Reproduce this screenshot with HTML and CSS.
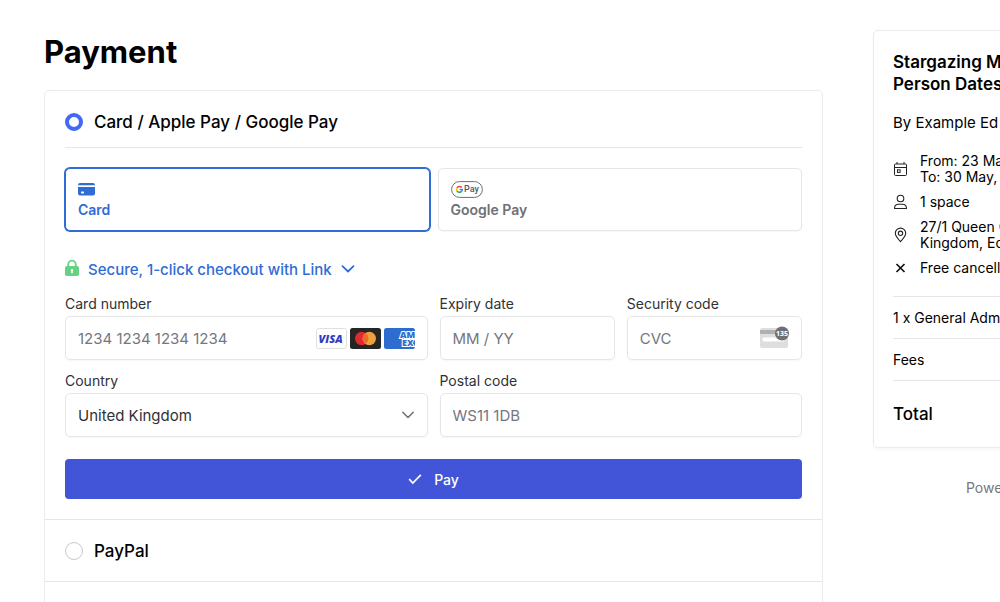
FILE: index.html
```html
<!DOCTYPE html>
<html lang="en">
<head>
  <meta charset="UTF-8" />
  <title>Payment</title>
  <meta name="viewport" content="width=device-width, initial-scale=1.0" />
  <link rel="stylesheet" href="styles.css">
</head>
<body>
  <div class="page">
    <main class="payment">
      <h1>Payment</h1>

      <form class="methods">
        <!-- card -->
        <section class="method">
          <label class="method-title with-line">
            <input type="radio" name="method" class="radio" checked />
            Card / Apple Pay / Google Pay
          </label>

          <div class="tabs">
            <button type="button" class="tab selected">
              <svg class="tab-icon" width="18" height="17" viewBox="0 0 18 17">
                <path d="M2 2h13a2 2 0 0 1 2 2v.3H0V4a2 2 0 0 1 2-2z" fill="#2f6cd6" />
                <path d="M0 6h17v6.500a2 2 0 0 1-2 2H2a2 2 0 0 1-2-2z" fill="#2f6cd6" />
                <rect x="3" y="10.500" width="3" height="2" rx=".8" fill="#fff" />
              </svg>
              <span>Card</span>
            </button>
            <button type="button" class="tab">
              <svg class="tab-icon" width="32" height="17" viewBox="0 0 32 17">
                <rect x=".6" y=".6" width="30.800" height="15.800" rx="7.900" fill="#fff" stroke="#6b6e72" />
                <g fill="none" stroke-width="1.500">
                  <path d="M10.700 6.500A2.900 2.900 0 0 0 6 7" stroke="#ea4335" />
                  <path d="M6 7a2.900 2.900 0 0 0 0 3" stroke="#fbbc04" />
                  <path d="M6 10a2.900 2.900 0 0 0 4.300.7" stroke="#34a853" />
                  <path d="M10.300 10.700a2.900 2.900 0 0 0 1-2.200H8.600" stroke="#4285f4" />
                </g>
                <text x="13" y="11.300" class="gpay-text">Pay</text>
              </svg>
              <span>Google Pay</span>
            </button>
          </div>

          <button type="button" class="link-checkout">
            <svg width="14" height="18" viewBox="0 0 14 18">
              <path d="M3.200 7V4.500a3.800 3.800 0 0 1 7.600 0V7" fill="none" stroke="#65d283" stroke-width="1.800" />
              <rect x="0" y="6" width="14" height="10" rx="1.800" fill="#65d283" />
              <path d="M6.200 11.200a1.200 1.200 0 1 1 1.600 0v1.600a.8.8 0 0 1-1.600 0z" fill="#fff" />
            </svg>
            <span>Secure, 1-click checkout with Link</span>
            <svg width="14" height="8" viewBox="0 0 14 8">
              <path d="M1.500 1.200 7 6.500l5.500-5.300" fill="none" stroke="#2f6cd6" stroke-width="1.800" stroke-linecap="round" stroke-linejoin="round" />
            </svg>
          </button>

          <div class="fields">
            <div class="field wide">
              <label for="number">Card number</label>
              <div class="control">
                <input type="text" id="number" placeholder="1234 1234 1234 1234" />
                <div class="brands">
                  <svg width="31" height="21" viewBox="0 0 31 21">
                    <rect x=".5" y=".5" width="30" height="20" rx="2" fill="#fff" stroke="#dedfe3" />
                    <text x="2.500" y="14.500" class="visa-text">VISA</text>
                  </svg>
                  <svg width="31" height="21" viewBox="0 0 31 21">
                    <rect width="31" height="21" rx="2.500" fill="#252525" />
                    <circle cx="11.700" cy="10.500" r="6.700" fill="#df2b2f" />
                    <circle cx="19.300" cy="10.500" r="6.700" fill="#eea03d" />
                    <path d="M15.500 5a6.700 6.700 0 0 1 0 11 6.700 6.700 0 0 1 0-11z" fill="#ee6b2d" />
                  </svg>
                  <svg width="31" height="21" viewBox="0 0 31 21">
                    <rect width="31" height="21" rx="2.500" fill="#2e6dcd" />
                    <text x="16" y="10" class="amex-text">AM</text>
                    <text x="18" y="17.500" class="amex-text">EX</text>
                  </svg>
                </div>
              </div>
            </div>

            <div class="field">
              <label for="expiry">Expiry date</label>
              <div class="control">
                <input type="text" id="expiry" placeholder="MM / YY" />
              </div>
            </div>

            <div class="field">
              <label for="cvc">Security code</label>
              <div class="control">
                <input type="text" id="cvc" placeholder="CVC" />
                <div class="brands">
                  <svg width="30" height="24" viewBox="0 0 30 24">
                    <rect x="1" y="2" width="28" height="20" rx="2.500" fill="#dedede" />
                    <rect x="1" y="4" width="28" height="4" fill="#b0b0b0" />
                    <rect x="3.500" y="11.500" width="22" height="4" rx="1.500" fill="#fff" />
                    <circle cx="23" cy="7.500" r="7" fill="#6f7073" />
                    <text x="23" y="10" class="cvc-text">135</text>
                  </svg>
                </div>
              </div>
            </div>

            <div class="field wide">
              <label for="country">Country</label>
              <div class="control">
                <select id="country">
                  <option>United Kingdom</option>
                </select>
                <svg class="chevron" width="14" height="8" viewBox="0 0 14 8">
                  <path d="M1.800 1.300 7 6.500l5.200-5.200" fill="none" stroke="#6d6e78" stroke-width="1.500" stroke-linecap="round" stroke-linejoin="round" />
                </svg>
              </div>
            </div>

            <div class="field wide">
              <label for="postal">Postal code</label>
              <div class="control">
                <input type="text" id="postal" placeholder="WS11 1DB" />
              </div>
            </div>
          </div>

          <button type="submit" class="pay">
            <svg width="14" height="12" viewBox="0 0 14 12">
              <path d="M1.200 6.200 4.800 10 12.800 1.800" fill="none" stroke="#fff" stroke-width="1.700" />
            </svg>
            <span>Pay</span>
          </button>
        </section>

        <!-- paypal -->
        <section class="method">
          <label class="method-title">
            <input type="radio" name="method" class="radio" />
            PayPal
          </label>
        </section>

        <section class="method next"></section>
      </form>
    </main>

    <aside class="side">
      <div class="summary">
        <h2>Stargazing M<br />Person Dates</h2>
        <p class="host">By Example Ed</p>

        <ul class="details">
          <li>
            <svg width="15" height="16" viewBox="0 0 15 16">
              <g fill="none" stroke="#222">
                <rect x="1.500" y="3" width="12" height="11.500" rx="1" />
                <path d="M1.500 6.500h12M4 1v2M11 1v2" />
                <rect x="4.500" y="8.800" width="2.600" height="2.600" />
              </g>
            </svg>
            <span>From: 23 Ma<br />To: 30 May, 1</span>
          </li>
          <li>
            <svg width="15" height="16" viewBox="0 0 15 16">
              <g fill="none" stroke="#222" stroke-width="1.100">
                <circle cx="7.500" cy="4.500" r="3.300" />
                <path d="M1.500 14.500c0-3 2-4.300 4-4.300h4c2 0 4 1.300 4 4.300z" stroke-linejoin="round" />
              </g>
            </svg>
            <span>1 space</span>
          </li>
          <li>
            <svg width="15" height="16" viewBox="0 0 15 16">
              <g fill="none" stroke="#222" stroke-width="1.100">
                <path d="M7.500 14.700C5 12 2.300 9 2.300 6.300a5.200 5.200 0 0 1 10.400 0C12.700 9 10 12 7.500 14.700z" />
                <circle cx="7.500" cy="6.300" r="2.200" />
              </g>
            </svg>
            <span>27/1 Queen C<br />Kingdom, Ed</span>
          </li>
          <li>
            <svg width="15" height="16" viewBox="0 0 15 16">
              <path d="m3.500 4 8 8M11.500 4l-8 8" stroke="#111" stroke-width="1.700" />
            </svg>
            <span>Free cancella</span>
          </li>
        </ul>

        <div class="line">1 x General Admi</div>
        <div class="line">Fees</div>
        <div class="line total">Total</div>
      </div>
      <p class="powered">Powe</p>
    </aside>
  </div>
</body>
</html>
```
FILE: styles.css
```css
* {
  box-sizing: border-box;
}
html, body {
  margin: 0;
  padding: 0;
  overflow: hidden;
}
body {
  background: #fff;
  color: #000;
  font-family: Inter, "Liberation Sans", sans-serif;
  font-size: 14px;
}
button, input, select {
  font: inherit;
  margin: 0;
}
svg {
  display: block;
  flex: none;
}
.page {
  display: flex;
  align-items: flex-start;
  gap: 50px;
  min-width: 1263px;
  padding: 30px 44px 0;
}
.payment {
  flex: 1;
}
h1 {
  margin: 0;
  padding: 2px 0 18px;
  font-size: 31px;
  line-height: 40px;
  font-weight: 700;
}

/* payment methods */
.methods {
  border: 1px solid #ebebef;
  border-radius: 5px;
}
.method {
  padding: 0 20px;
}
.method + .method {
  border-top: 1px solid #e6e6ea;
}
.method-title {
  display: flex;
  align-items: center;
  gap: 11px;
  height: 61px;
  font-size: 17px;
  font-weight: 500;
}
.with-line {
  height: 57px;
  padding-top: 5px;
  border-bottom: 1px solid #e6e6ea;
}
.radio {
  appearance: none;
  width: 18px;
  height: 18px;
  border: 1px solid #c8c8cc;
  border-radius: 50%;
  background: #fff;
}
.radio:checked {
  border: 4px solid #4169f5;
}
.next {
  height: 80px;
}

/* card / google pay tabs */
.tabs {
  display: grid;
  grid-template-columns: 1fr 1fr;
  gap: 8px;
  padding-top: 20px;
}
.tab {
  display: flex;
  flex-direction: column;
  align-items: flex-start;
  gap: 2px;
  height: 63px;
  padding: 12px;
  border: 1px solid #e6e6e6;
  border-radius: 5px;
  background: #fff;
  box-shadow: 0 1px 2px rgba(0, 0, 0, .04);
  color: #6f7075;
  font-size: 14px;
  line-height: 20px;
  font-weight: 600;
}
.tab.selected {
  border-color: #2f6cd6;
  box-shadow: 0 0 0 1px #2f6cd6;
  color: #2f6cd6;
}

.link-checkout {
  display: flex;
  align-items: center;
  gap: 9px;
  height: 20px;
  margin: 28px 0 16px;
  padding: 0;
  border: 0;
  background: none;
  color: #2f6cd6;
  font-size: 15px;
  font-weight: 500;
}

/* form */
.fields {
  display: grid;
  grid-template-columns: repeat(4, minmax(0, 1fr));
  gap: 12px;
}
.wide {
  grid-column: span 2;
}
.field label {
  display: block;
  margin-bottom: 3px;
  color: #303136;
  font-size: 14px;
  line-height: 18px;
}
.control {
  display: flex;
  align-items: center;
  height: 44px;
  padding-right: 12px;
  border: 1px solid #e6e6e6;
  border-radius: 5px;
  box-shadow: 0 1px 2px rgba(0, 0, 0, .04);
}
.control input, .control select {
  flex: 1;
  min-width: 0;
  height: 42px;
  padding: 0 0 0 12px;
  border: 0;
  outline: 0;
  background: none;
  appearance: none;
  color: #303136;
  font-size: 15px;
}
.control input::placeholder {
  color: #757680;
  opacity: 1;
}
.brands {
  display: flex;
  gap: 3px;
}
.pay {
  display: flex;
  align-items: center;
  justify-content: center;
  gap: 12px;
  width: 100%;
  height: 40px;
  margin: 22px 0 20px;
  border: 0;
  border-radius: 4px;
  background: #4255d8;
  color: #fff;
  font-size: 14px;
  font-weight: 500;
}

/* order summary */
.side {
  flex: 0 0 346px;
  white-space: nowrap;
}
.summary {
  padding: 20px 19px 0;
  border: 1px solid #ebebef;
  border-radius: 5px;
  box-shadow: 0 2px 3px rgba(0, 0, 0, .03);
}
h2 {
  margin: 0;
  font-size: 17px;
  line-height: 22px;
  font-weight: 600;
}
.host {
  margin: 18px 0 20px;
  font-size: 15px;
  line-height: 20px;
}
.details {
  display: flex;
  flex-direction: column;
  gap: 9px;
  margin: 0 0 20px;
  padding: 0;
  list-style: none;
  line-height: 16px;
}
.details li {
  display: flex;
  align-items: center;
  gap: 12px;
}
.line {
  height: 42px;
  border-top: 1px solid #e6e6ea;
  line-height: 41px;
}
.total {
  height: 67px;
  font-size: 17px;
  line-height: 67px;
  font-weight: 500;
}
.powered {
  margin: 30px 0 0;
  padding-left: 93px;
  color: #77787c;
  line-height: 20px;
}

/* lettering in the icons */
.gpay-text {
  font: 500 9px Roboto, sans-serif;
  fill: #55585c;
}
.visa-text {
  font: italic 800 11px "Open Sans", sans-serif;
  fill: #2f3fc4;
}
.amex-text {
  font: 800 9px "Open Sans", sans-serif;
  fill: #2e6dcd;
  stroke: #fff;
  stroke-width: 2px;
  paint-order: stroke;
}
.cvc-text {
  font: 700 7px "Open Sans", sans-serif;
  fill: #fff;
  text-anchor: middle;
}
```
